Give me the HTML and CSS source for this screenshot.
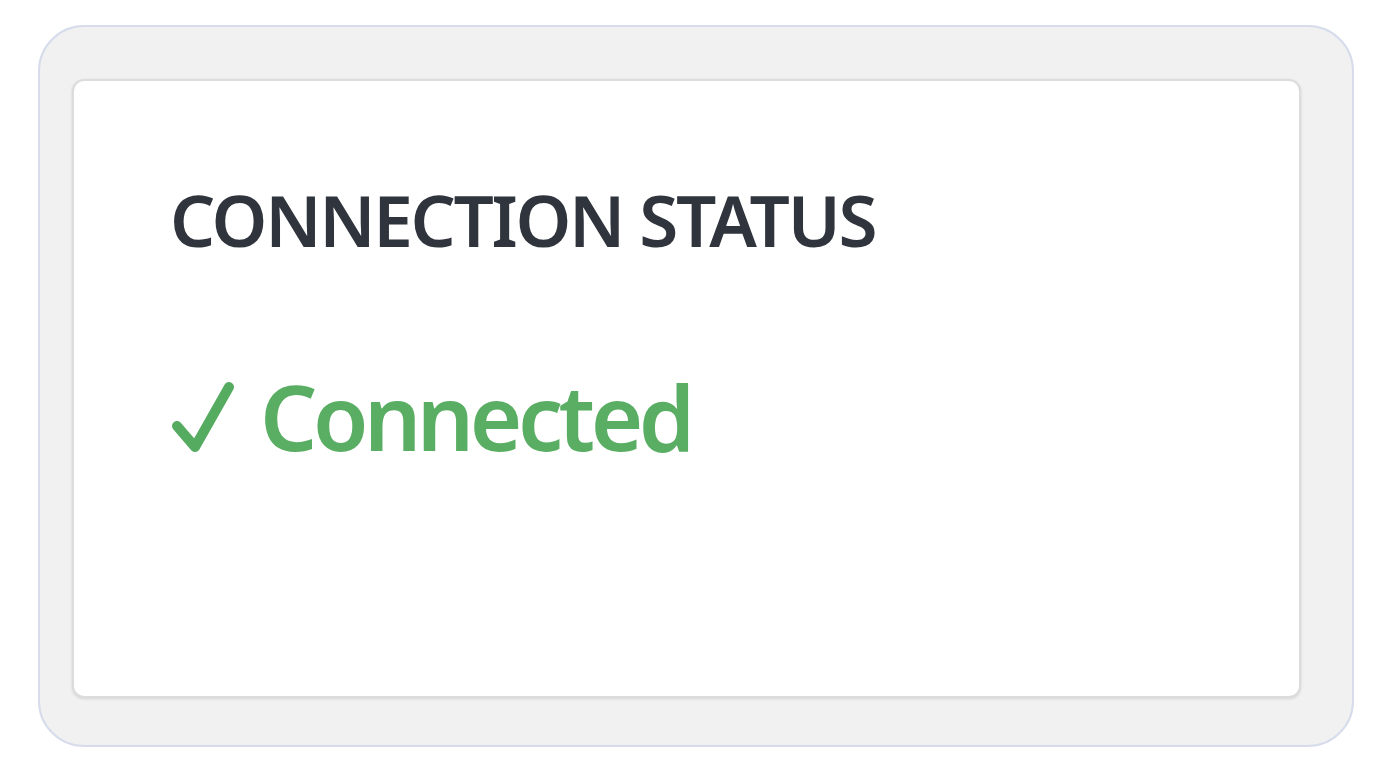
FILE: index.html
```html
<!DOCTYPE html>
<html>
<head>
<meta charset="utf-8">
<link rel="stylesheet" href="styles.css">
</head>
<body>
<div class="frame">
  <div class="panel">
    <h1 class="title">CONNECTION STATUS</h1>
    <div class="status">
      <svg class="check" width="70" height="76" viewBox="0 0 70 76" aria-hidden="true">
        <path d="M9 48 L27 69 L61 9" fill="none" stroke="#55ab60" stroke-width="10" stroke-linecap="round" stroke-linejoin="round"/>
      </svg>
      <span class="label">Connected</span>
    </div>
  </div>
</div>
</body>
</html>
```
FILE: styles.css
```css
html, body { margin: 0; padding: 0; background: #ffffff; }
body { width: 1376px; height: 768px; overflow: hidden; font-family: "Noto Sans", "Open Sans", sans-serif; }
.frame {
  margin: 25px 0 0 38px;
  width: 1316px;
  height: 722px;
  box-sizing: border-box;
  border: 2px solid #d6dceb;
  border-radius: 46px;
  background: #f1f1f1;
  padding: 52px 51px 47px 32px;
}
.panel {
  height: 100%;
  box-sizing: border-box;
  background: #ffffff;
  border: 2px solid #dcdcdc;
  border-radius: 12px;
  box-shadow: 0 1px 3px rgba(0,0,0,0.12);
  padding: 103px 0 0 96px;
}
.title {
  margin: 0;
  font-size: 71px;
  font-weight: 600;
  color: #2f343d;
  line-height: 1;
  letter-spacing: -2.3px;
}
.status {
  margin-top: 116px;
  display: flex;
  align-items: flex-start;
  color: #5aae63;
  font-weight: 600;
  line-height: 1;
}
.check { display: block; margin: 7px 22px 0 -2px; flex: none; }
.label { font-size: 90px; letter-spacing: -4.5px; }
```
